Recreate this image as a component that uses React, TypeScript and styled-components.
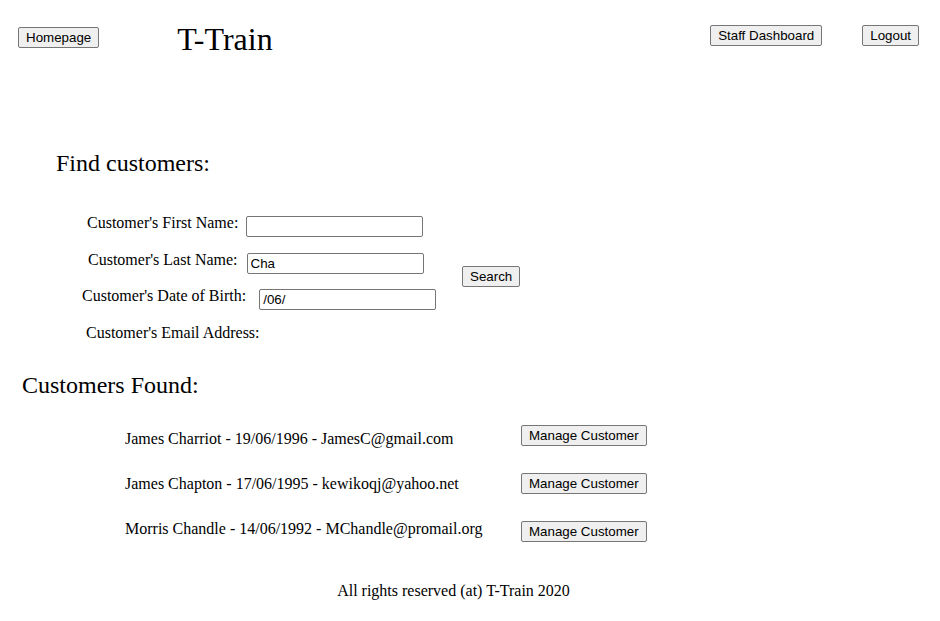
import React from "react";
import styled, { createGlobalStyle } from "styled-components";

const GlobalStyle = createGlobalStyle`
  body {
    margin: 0;
    background: #ffffff;
    color: #000000;
    font-family: "Liberation Serif", "Times New Roman", serif;
    font-size: 16px;
  }
`;

const Page = styled.div`
  width: 940px;
`;

const Button = styled.button`
  box-sizing: border-box;
  height: 21px;
  padding: 0 7px;
  font-family: "Liberation Sans", Arial, sans-serif;
  font-size: 13.333px;
  line-height: 19px;
  color: #000000;
  background: #efefef;
  border: 1px solid #767676;
  border-radius: 2px;
  white-space: nowrap;
  cursor: pointer;
`;

const Header = styled.header`
  display: flex;
  align-items: flex-start;
  height: 60px;
  padding: 0 21px 0 18px;
`;

const HomeButton = styled(Button)`
  margin-top: 27px;
`;

const Title = styled.h1`
  margin: 21px 0 0 78px;
  font-size: 32px;
  font-weight: normal;
  line-height: 36px;
`;

const Spacer = styled.div`
  flex: 1;
`;

const NavGroup = styled.nav`
  display: flex;
  gap: 40px;
  margin-top: 25px;
`;

const SectionTitle = styled.h2<{ $indent: number; $top: number }>`
  margin: ${(p) => p.$top}px 0 0;
  padding-left: ${(p) => p.$indent}px;
  font-size: 24px;
  font-weight: normal;
  line-height: 27px;
`;

const SearchForm = styled.form`
  display: grid;
  grid-template-columns: 436px auto;
  align-items: start;
  margin-top: 37px;
`;

const FieldList = styled.div`
  display: flex;
  flex-direction: column;
`;

const FieldRow = styled.div<{ $indent: number; $gap: number }>`
  display: flex;
  align-items: flex-start;
  height: 36.5px;
  padding-left: ${(p) => p.$indent}px;
  gap: ${(p) => p.$gap}px;
`;

const Label = styled.label`
  line-height: 18px;
  white-space: nowrap;
`;

const TextInput = styled.input`
  box-sizing: border-box;
  width: 177px;
  height: 21px;
  margin: 2px 0 0;
  padding: 1px 3px;
  font-family: "Liberation Sans", Arial, sans-serif;
  font-size: 13.333px;
  color: #000000;
  background: #ffffff;
  border: 1px solid #767676;
  border-radius: 2px;
  outline: none;
`;

const SearchButton = styled(Button)`
  justify-self: start;
  margin: 52px 0 0 26px;
`;

const Results = styled.div`
  display: flex;
  align-items: flex-start;
  margin-top: 26px;
  padding-left: 125px;
`;

const ResultTexts = styled.ul`
  display: flex;
  flex-direction: column;
  gap: 27px;
  width: 396px;
  margin: 5px 0 0;
  padding: 0;
  list-style: none;
`;

const ResultText = styled.li`
  line-height: 18px;
  white-space: nowrap;
`;

const ResultActions = styled.div`
  display: flex;
  flex-direction: column;
  align-items: flex-start;
  gap: 27px;
`;

const Footer = styled.footer`
  margin-top: 40px;
  padding-right: 33px;
  text-align: center;
  line-height: 18px;
`;

const fields = [
  { label: "Customer's First Name:", value: "", indent: 87, gap: 8, input: true },
  { label: "Customer's Last Name:", value: "Cha", indent: 88, gap: 9, input: true },
  { label: "Customer's Date of Birth:", value: "/06/", indent: 82, gap: 13, input: true },
  { label: "Customer's Email Address:", value: "", indent: 86, gap: 0, input: false },
];

const customers = [
  "James Charriot - 19/06/1996 - JamesC@gmail.com",
  "James Chapton - 17/06/1995 - kewikoqj@yahoo.net",
  "Morris Chandle - 14/06/1992 - MChandle@promail.org",
];

export default function App() {
  return (
    <Page>
      <GlobalStyle />
      <Header>
        <HomeButton type="button">Homepage</HomeButton>
        <Title>T-Train</Title>
        <Spacer />
        <NavGroup>
          <Button type="button">Staff Dashboard</Button>
          <Button type="button">Logout</Button>
        </NavGroup>
      </Header>

      <SectionTitle $indent={56} $top={90}>
        Find customers:
      </SectionTitle>

      <SearchForm onSubmit={(e) => e.preventDefault()}>
        <FieldList>
          {fields.map((f) => (
            <FieldRow key={f.label} $indent={f.indent} $gap={f.gap}>
              <Label>{f.label}</Label>
              {f.input && <TextInput type="text" defaultValue={f.value} />}
            </FieldRow>
          ))}
        </FieldList>
        <SearchButton type="submit">Search</SearchButton>
      </SearchForm>

      <SectionTitle $indent={22} $top={12}>
        Customers Found:
      </SectionTitle>

      <Results>
        <ResultTexts>
          {customers.map((c) => (
            <ResultText key={c}>{c}</ResultText>
          ))}
        </ResultTexts>
        <ResultActions>
          {customers.map((c) => (
            <Button key={c} type="button">
              Manage Customer
            </Button>
          ))}
        </ResultActions>
      </Results>

      <Footer>All rights reserved (at) T-Train 2020</Footer>
    </Page>
  );
}
